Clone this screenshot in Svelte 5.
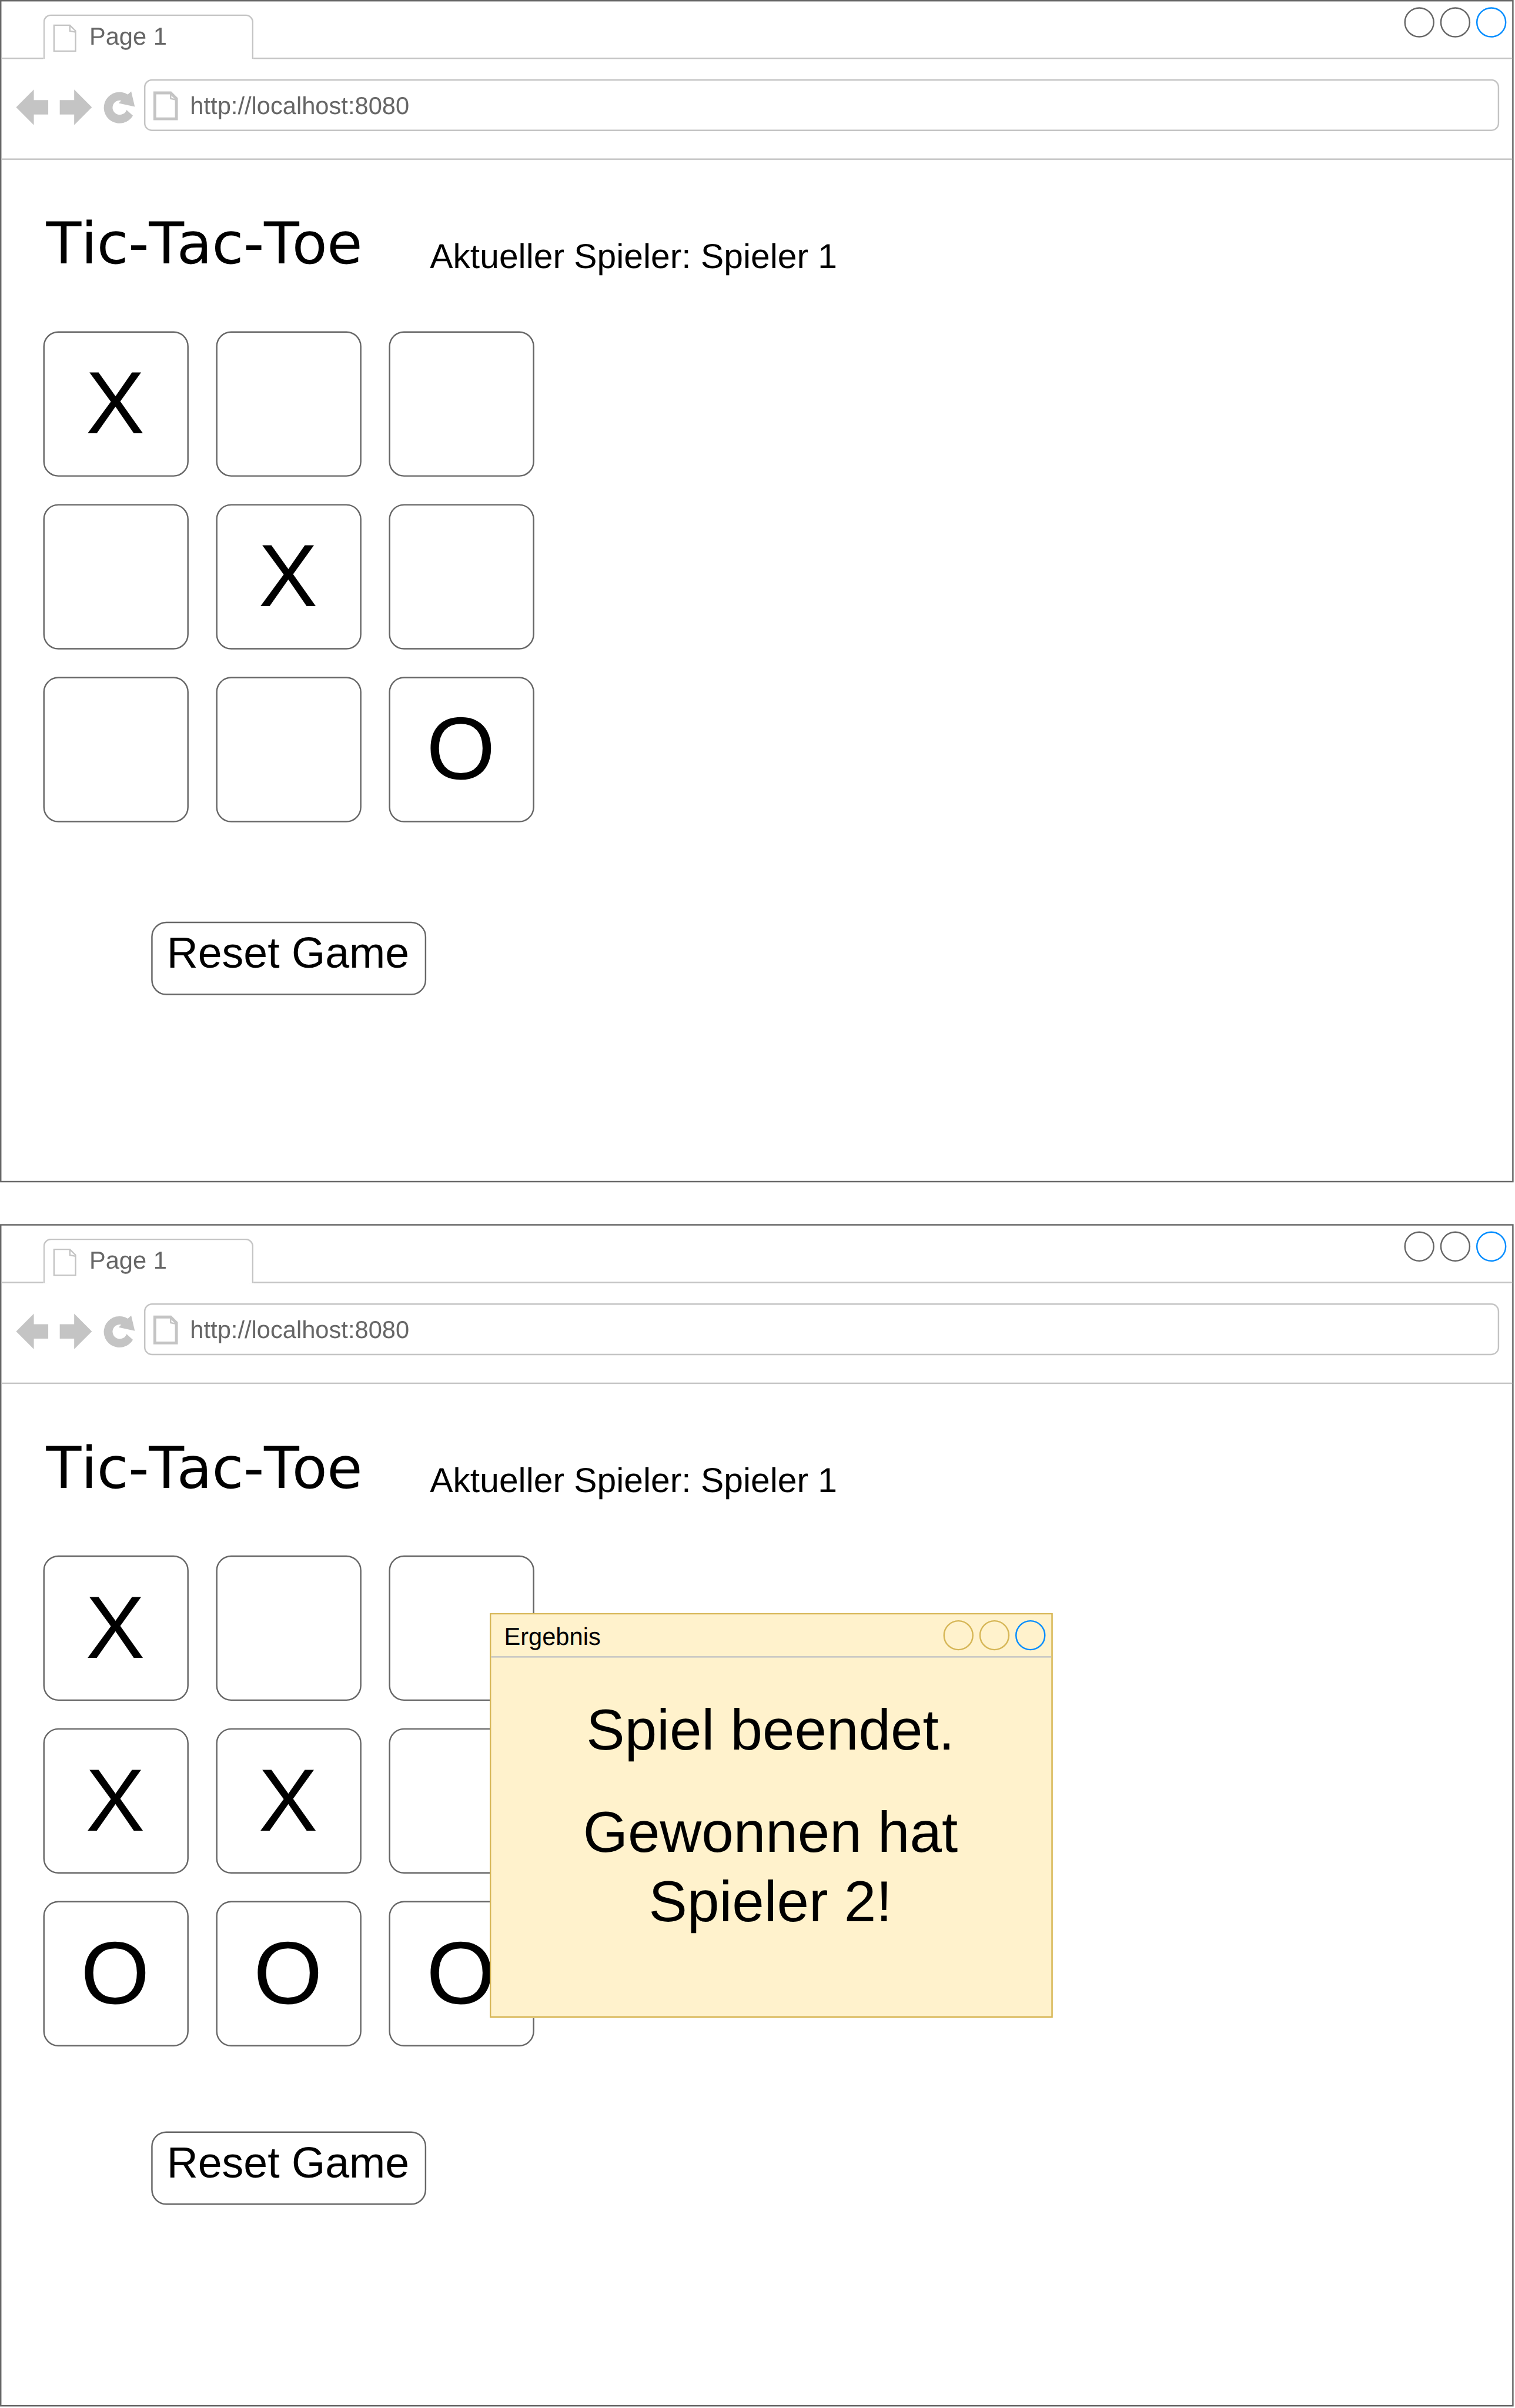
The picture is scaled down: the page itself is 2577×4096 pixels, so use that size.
<script>
  const windows = [
    { cells: ['X', '', '', '', 'X', '', '', '', 'O'], result: false },
    { cells: ['X', '', '', 'X', 'X', '', 'O', 'O', 'O'], result: true },
  ];
</script>

<div class="viewport">
  <main class="stage">
    {#each windows as win}
      <section class="browser" class:finished={win.result}>
        <header class="tabs">
          <div class="tab">
            <svg class="doc" viewBox="0 0 17 20" width="17" height="20" fill="none" stroke="#c4c4c4">
              <path d="M1.5 1.5H12.5L16.5 5.5V19.5H1.5Z" />
              <path d="M12.5 1.5V5.5L16.5 6.3" />
            </svg>
            <span>Page 1</span>
          </div>
          <div class="rest"></div>
          <div class="circles"><i></i><i></i><i class="blue"></i></div>
        </header>
        <nav class="toolbar">
          <svg class="nav" viewBox="0 0 100 69" width="100" height="69" fill="#c4c4c4">
            <path d="M11.2 33.5 23.5 21.2V28.5H33.5V38.5H23.5V45.8Z" />
            <path d="M63.8 33.5 51.5 21.2V28.5H41.5V38.5H51.5V45.8Z" />
            <path d="M88.7 24.6 91.1 22.5 93.6 33.1 82.4 30.6 84.2 28.8A5 5 0 1 0 87.9 35.3L92.3 39.3A10.85 10.85 0 1 1 88.7 24.6Z" />
          </svg>
          <div class="address">
            <svg class="doc" viewBox="0 0 18 21" width="18" height="21" fill="none" stroke="#c4c4c4">
              <path d="M1.5 1.5H12.5L16.5 5.5V19.5H1.5Z" transform="translate(0 0)" stroke-width="2" />
              <path d="M12.5 1.5V5.5L16.5 6.3" />
            </svg>
            <span>http://localhost:8080</span>
          </div>
        </nav>
        <div class="page">
          <div class="heading">
            <h1>Tic-<span>T</span>ac-<span>T</span>oe</h1>
            <p>Aktueller Spieler: Spieler 1</p>
          </div>
          <div class="board">
            {#each win.cells as mark}
              <div class="cell">{mark}</div>
            {/each}
          </div>
          <button>Reset Game</button>
        </div>
        {#if win.result}
          <div class="dialog">
            <div class="title">
              <span>Ergebnis</span>
              <div class="circles gold"><i></i><i></i><i class="blue"></i></div>
            </div>
            <div class="message">
              <p>Spiel beendet.</p>
              <p>Gewonnen hat Spieler 2!</p>
            </div>
          </div>
        {/if}
      </section>
    {/each}
  </main>
</div>

<style>
  :global(body) { margin: 0; background: #fff; }
  .viewport { width: 2577px; height: 4096px; overflow: hidden; }
  /* The layout is written in 1052 x 1672 units and scaled up to the window. */
  .stage {
    width: 1052px;
    height: 1672px;
    display: flex;
    flex-direction: column;
    gap: 29px;
    transform: scale(2.4497);
    transform-origin: 0 0;
    font-family: "Liberation Sans", Arial, sans-serif;
    text-rendering: geometricPrecision;
    color: #000;
  }
  .stage :global(*) { box-sizing: border-box; }
  h1, p { margin: 0; font-weight: 400; }
  .browser {
    position: relative;
    width: 1051px;
    height: 821px;
    border: 1px solid #666;
    flex: none;
  }
  .tabs { height: 40px; display: flex; align-items: flex-end; position: relative; }
  .tabs::before { content: ""; width: 29px; height: 1px; background: #c4c4c4; }
  .tab {
    width: 146px;
    height: 31px;
    border: 1px solid #c4c4c4;
    border-bottom: 0;
    border-radius: 5.5px 5.5px 0 0;
    display: flex;
    padding: 5px 0 0 5px;
    color: #666;
    font-size: 17px;
    line-height: 20px;
  }
  .tab span { margin-left: 9px; }
  .rest { flex: 1; height: 1px; background: #c4c4c4; }
  .circles { position: absolute; top: 4px; right: 4px; display: flex; gap: 4px; }
  .circles i { width: 21px; height: 21px; border: 1px solid #666; border-radius: 50%; }
  .circles.gold i { border-color: #d6b656; }
  .circles i.blue { border-color: #008cff; }
  .toolbar { height: 70px; border-bottom: 1px solid #c4c4c4; display: flex; }
  .nav { margin-left: -1px; flex: none; }
  .address {
    margin-top: 14px;
    width: 941px;
    height: 36px;
    border: 1px solid #c4c4c4;
    border-radius: 5.5px;
    display: flex;
    align-items: flex-start;
    padding: 7px 0 0 5px;
    color: #666;
    font-size: 17px;
    line-height: 20px;
  }
  .address span { margin-left: 8px; padding-top: 1px; }
  .page { padding-left: 29px; }
  .heading { height: 119px; display: flex; }
  h1 {
    width: 268.5px;
    padding: 35px 0 0 2px;
    font: 40px/48px "DejaVu Sans", Verdana, sans-serif;
    font-kerning: none;
    letter-spacing: -0.15px;
    white-space: nowrap;
  }
  h1 span { letter-spacing: -5px; }
  .heading p { font-size: 24px; line-height: 28px; padding-top: 54px; white-space: nowrap; }
  .board { display: grid; grid-template-columns: repeat(3, 101px); grid-auto-rows: 101px; gap: 19px; }
  .cell {
    border: 1px solid #666;
    border-radius: 10.5px;
    padding-right: 1px;
    font-size: 61.5px;
    line-height: 99px;
    text-align: center;
  }
  button {
    display: block;
    width: 191px;
    height: 51px;
    margin: 69px 0 0 75px;
    padding: 0 1px 7px 0;
    background: #fff;
    border: 1px solid #666;
    border-radius: 10.5px;
    font: 30px/34px "Liberation Sans", Arial, sans-serif;
    color: #000;
  }
  .finished button { margin-top: 59px; }
  .dialog {
    position: absolute;
    left: 339px;
    top: 269px;
    width: 391px;
    height: 281px;
    border: 1px solid #d6b656;
    background: #fff2cc;
  }
  .title {
    position: relative;
    height: 30px;
    border-bottom: 1px solid #c4c4c4;
    padding: 1px 0 0 9px;
    font-size: 17px;
    line-height: 30px;
  }
  .message { width: 300px; margin: 27px auto 0 44px; font-size: 40px; line-height: 48px; text-align: center; }
  .message p + p { margin-top: 23px; }
</style>
